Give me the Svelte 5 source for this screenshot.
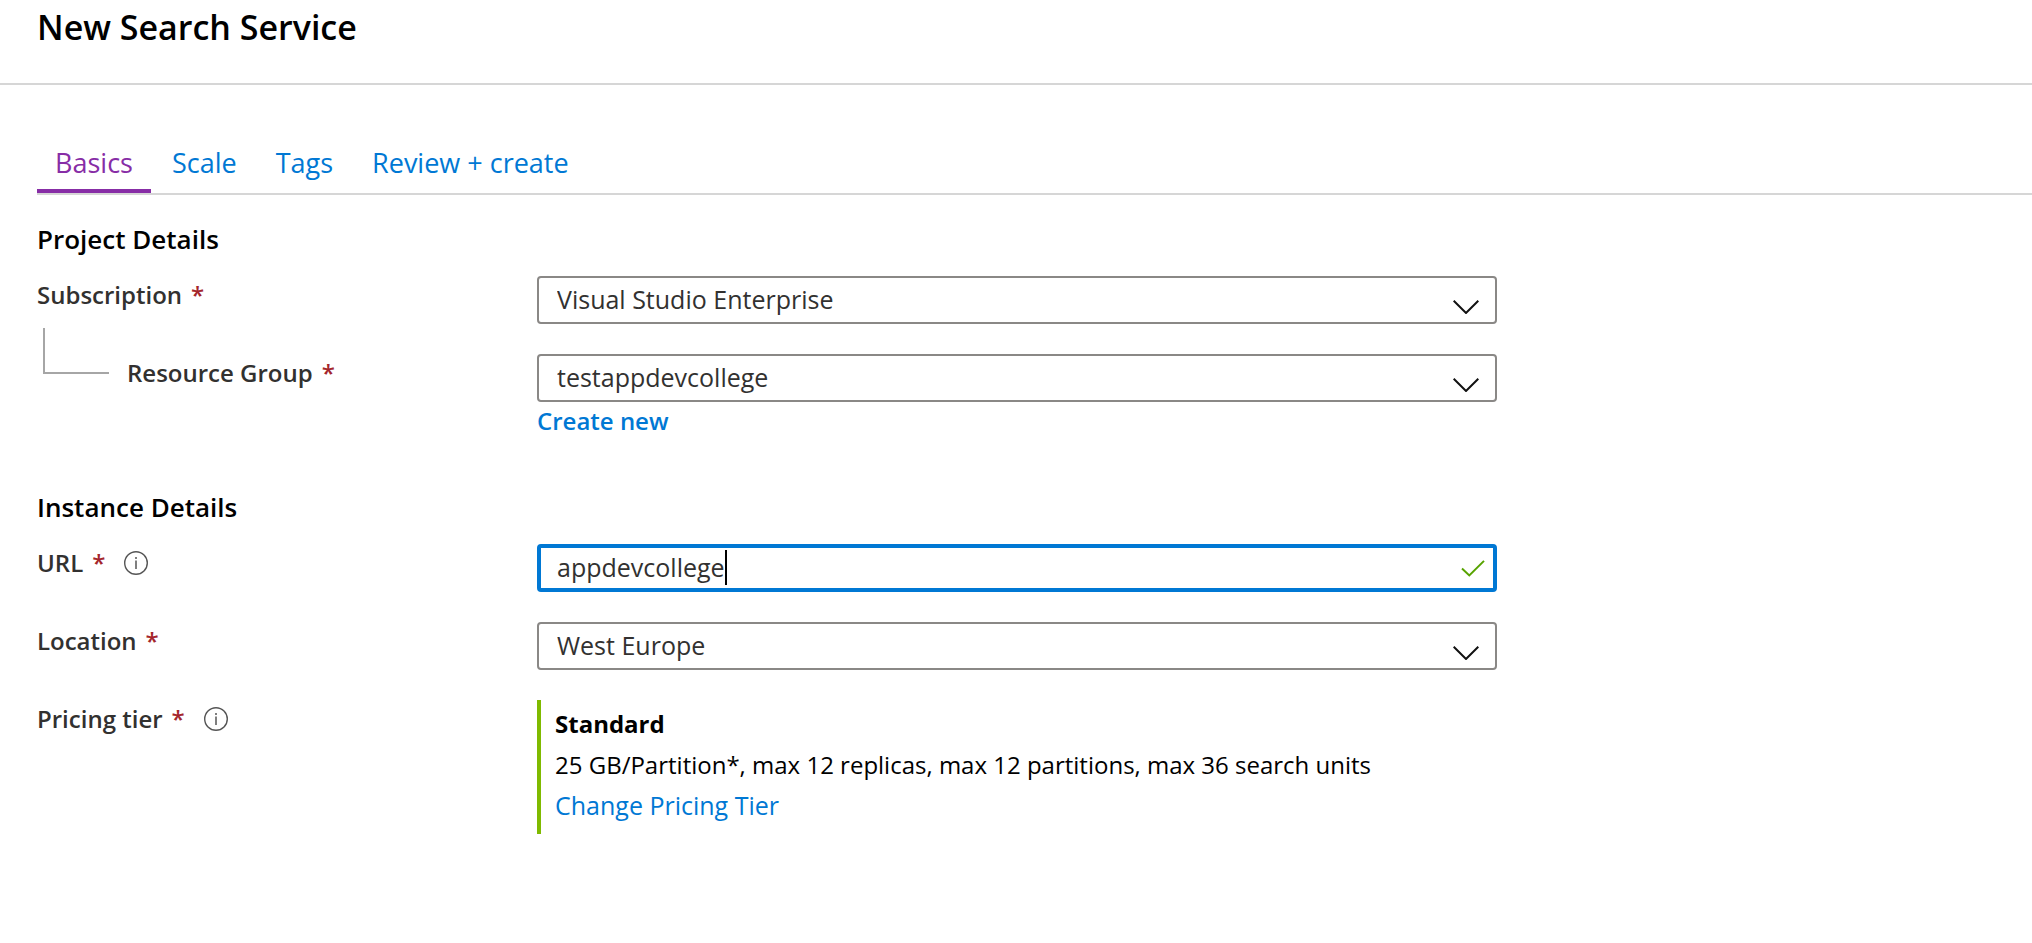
<script>
  const tabs = ['Basics', 'Scale', 'Tags', 'Review + create'];
  let active = $state('Basics');
  let url = $state('appdevcollege');
</script>

{#snippet chevron()}
  <svg class="chevron" viewBox="0 0 26 14" aria-hidden="true">
    <path d="M0.7 0.7 L13 13 L25.3 0.7" fill="none" stroke="#111" stroke-width="2" />
  </svg>
{/snippet}

{#snippet info()}
  <svg class="info" viewBox="0 0 24 24" aria-hidden="true">
    <circle cx="12" cy="12" r="11.3" fill="none" stroke="#555" stroke-width="1.4" />
    <path d="M12 9.6V18" stroke="#555" stroke-width="1.5" />
    <circle cx="12" cy="7" r="1" fill="#555" />
  </svg>
{/snippet}

<header>
  <h1>New Search Service</h1>
</header>

<nav>
  {#each tabs as tab}
    <button type="button" class="tab" class:active={tab === active} onclick={() => (active = tab)}>{tab}</button>
  {/each}
</nav>

<main>
  <section>
    <h2>Project Details</h2>
    <div class="row">
      <label for="subscription">Subscription <span class="req">*</span></label>
      <div class="field">
        <select id="subscription"><option>Visual Studio Enterprise</option></select>
        {@render chevron()}
      </div>
    </div>
    <div class="row">
      <div class="nested">
        <span class="elbow"></span>
        <label for="group">Resource Group <span class="req">*</span></label>
      </div>
      <div>
        <div class="field">
          <select id="group"><option>testappdevcollege</option></select>
          {@render chevron()}
        </div>
        <a class="create" href="#new">Create new</a>
      </div>
    </div>
  </section>

  <section>
    <h2>Instance Details</h2>
    <div class="row">
      <label for="url">URL <span class="req">*</span>{@render info()}</label>
      <div class="field focused">
        <input id="url" type="text" bind:value={url} />
        <span class="caret"></span>
        <svg class="check" viewBox="0 0 24 17" aria-hidden="true">
          <path d="M1 8.5 L8.3 15.4 L23 0.9" fill="none" stroke="#57a300" stroke-width="2" />
        </svg>
      </div>
    </div>
    <div class="row">
      <label for="location">Location <span class="req">*</span></label>
      <div class="field">
        <select id="location"><option>West Europe</option></select>
        {@render chevron()}
      </div>
    </div>
    <div class="row">
      <div class="label">Pricing tier <span class="req">*</span>{@render info()}</div>
      <div class="tier">
        <strong>Standard</strong>
        <p>25 GB/Partition*, max 12 replicas, max 12 partitions, max 36 search units</p>
        <a href="#tier">Change Pricing Tier</a>
      </div>
    </div>
  </section>
</main>

<style>
  :global(body) {
    background: #fff;
    color: #000;
    font-family: 'Segoe UI', 'Open Sans', 'Noto Sans', sans-serif;
    font-size: 24px;
  }
  header {
    padding: 3px 37px 32px;
    border-bottom: 2px solid #d6d6d6;
  }
  h1 {
    margin: 0;
    font-size: 34px;
    font-weight: 600;
    line-height: 48px;
  }
  nav {
    display: flex;
    gap: 3px;
    margin: 52px 0 0 37px;
    border-bottom: 2px solid #d6d6d6;
  }
  .tab {
    padding: 0 18px;
    border: 0;
    border-bottom: 4px solid transparent;
    background: none;
    color: #0078d4;
    font-family: inherit;
    font-size: 27px;
    line-height: 52px;
    cursor: pointer;
  }
  .tab.active {
    color: #872da6;
    border-bottom-color: #872da6;
  }
  main {
    max-width: 1460px;
    padding: 24px 37px 0;
  }
  section {
    display: grid;
    gap: 30px;
    margin-bottom: 48px;
  }
  h2 {
    margin: 0 0 -13px;
    font-size: 26px;
    font-weight: 600;
    line-height: 40px;
  }
  .row {
    display: grid;
    grid-template-columns: 500px minmax(0, 1fr);
    align-items: start;
  }
  label,
  .label {
    display: flex;
    align-items: center;
    color: #323130;
    font-weight: 600;
    line-height: 38px;
  }
  .req {
    margin-left: 9px;
    color: #a4262c;
  }
  .info {
    width: 24px;
    height: 24px;
    margin-left: 19px;
  }
  .nested {
    display: flex;
    gap: 18px;
  }
  .elbow {
    width: 64px;
    height: 44px;
    margin: -26px 0 0 6px;
    border: solid #a6a6a6;
    border-width: 0 0 2px 2px;
  }
  .field {
    display: grid;
    height: 48px;
  }
  .field > * {
    grid-area: 1 / 1;
  }
  select {
    width: 100%;
    padding: 0 60px 2px 18px;
    border: 2px solid #8a8886;
    border-radius: 4px;
    appearance: none;
    background: #fff;
    color: #323130;
    font-family: inherit;
    font-size: 25px;
  }
  .chevron {
    width: 26px;
    height: 14px;
    margin: 24px 18px 0 0;
    justify-self: end;
    pointer-events: none;
  }
  .focused {
    display: flex;
    align-items: center;
    box-sizing: border-box;
    padding: 0 8px 0 16px;
    border: 4px solid #0078d4;
    border-radius: 4px;
  }
  input {
    field-sizing: content;
    min-width: 2px;
    padding: 0 0 2px;
    border: 0;
    outline: 0;
    background: none;
    color: #323130;
    caret-color: transparent;
    font-family: inherit;
    font-size: 25px;
  }
  .caret {
    width: 2px;
    height: 35px;
    margin-bottom: 2px;
    background: #000;
  }
  .check {
    width: 24px;
    height: 17px;
    margin-left: auto;
  }
  a {
    color: #0078d4;
    text-decoration: none;
  }
  .create {
    display: block;
    font-weight: 600;
    line-height: 37px;
  }
  .tier {
    padding: 3px 0 8px 14px;
    border-left: 4px solid #7fba00;
    line-height: 41px;
  }
  .tier p {
    margin: 0;
  }
  .tier strong {
    font-weight: 700;
  }
  .tier a {
    font-size: 25px;
  }
</style>
